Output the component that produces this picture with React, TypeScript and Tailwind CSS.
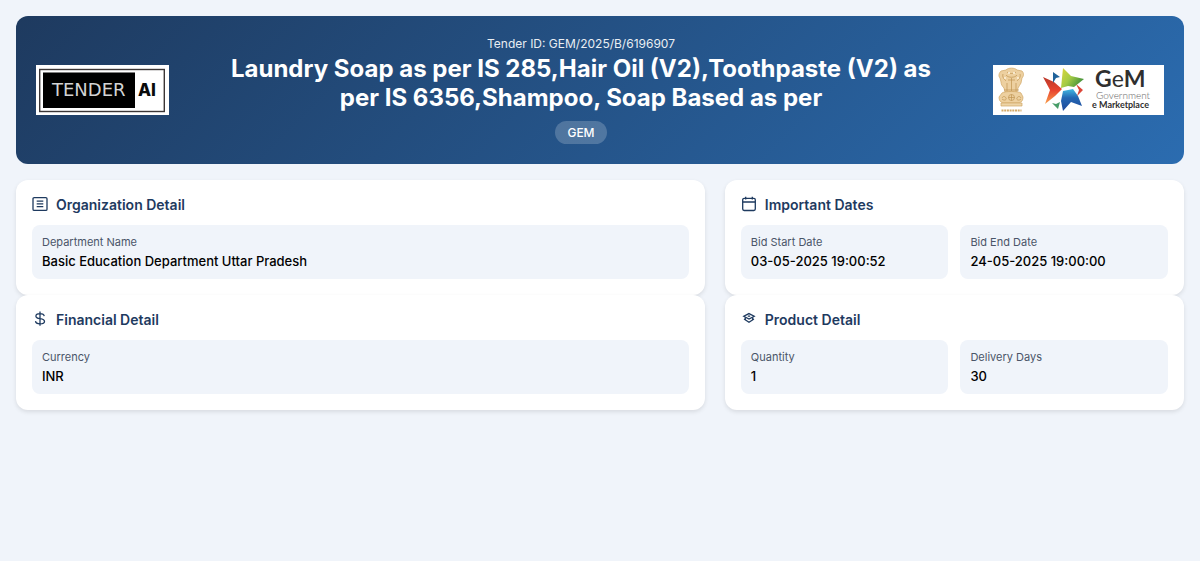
import React from 'react';

const organization = [
  { label: 'Department Name', value: 'Basic Education Department Uttar Pradesh' },
];

const dates = [
  { label: 'Bid Start Date', value: '03-05-2025 19:00:52' },
  { label: 'Bid End Date', value: '24-05-2025 19:00:00' },
];

const financial = [{ label: 'Currency', value: 'INR' }];

const product = [
  { label: 'Quantity', value: '1' },
  { label: 'Delivery Days', value: '30' },
];

type Field = { label: string; value: string };

function Icon({ children }: { children: React.ReactNode }) {
  return (
    <svg className="w-4 h-4 shrink-0" viewBox="0 0 16 16" fill="none" stroke="currentColor" strokeWidth="1.3" aria-hidden="true">
      {children}
    </svg>
  );
}

function OrganizationIcon() {
  return (
    <Icon>
      <rect x="1" y="1.600" width="14" height="12.800" rx="1.200" />
      <path d="M4.700 5.200h6.600M4.700 7.900h6.600M4.700 10.600h6.600" />
    </Icon>
  );
}

function CalendarIcon() {
  return (
    <Icon>
      <rect x="1.700" y="2.300" width="12.600" height="12.200" rx="1.400" />
      <path d="M1.700 6h12.600M4.700 .7v2.800M11.300 .7v2.800" />
    </Icon>
  );
}

function DollarIcon() {
  return (
    <Icon>
      <path d="M8 .6v14.200M12.200 5.200C12 3.600 10.400 2.700 8 2.700S3.900 3.700 3.900 5.200C3.900 6.800 5.500 7.300 8 7.700s4.500 1 4.500 2.700S10.600 12.800 8 12.800 3.700 11.900 3.500 10.200" />
    </Icon>
  );
}

function ProductIcon() {
  return (
    <Icon>
      <path d="M8 2.600 13.200 5.200 8 8 2.800 5.200z" />
      <path d="M6.800 5.200h2.400M3 8l5 3.200L13 8M4.300 6.500v2M11.700 6.500v2" />
    </Icon>
  );
}

function TenderLogo() {
  return (
    <svg className="w-[133px] h-[50px] shrink-0" viewBox="0 0 133 50" role="img" aria-label="Tender AI">
      <rect width="133" height="50" fill="#fff" />
      <rect x="3.700" y="4.500" width="124.600" height="42" fill="none" stroke="#3b3636" strokeWidth="1.400" />
      <rect x="7" y="7.500" width="92" height="35.500" fill="#000" />
      <text x="16" y="31" fill="#d4d4d4" fontFamily="DejaVu Sans, sans-serif" fontSize="18">TENDER</text>
      <text x="102" y="31" fill="#0a0a0a" fontFamily="Inter, sans-serif" fontWeight="800" fontSize="17">AI</text>
    </svg>
  );
}

function GemLogo() {
  return (
    <svg className="w-[171px] h-[50px] shrink-0" viewBox="0 0 171 50" role="img" aria-label="GeM Government e Marketplace">
      <defs>
        <linearGradient id="red" x1="0" y1="0" x2="0" y2="1">
          <stop offset="0" stopColor="#b9382a" />
          <stop offset="0.5" stopColor="#e8452f" />
          <stop offset="1" stopColor="#f9a04c" />
        </linearGradient>
        <linearGradient id="green" x1="0" y1="0" x2="1" y2="0.600">
          <stop offset="0" stopColor="#dcd63a" />
          <stop offset="0.5" stopColor="#a5cb44" />
          <stop offset="1" stopColor="#3f8f3c" />
        </linearGradient>
        <linearGradient id="blue" x1="0.500" y1="0" x2="0.500" y2="1">
          <stop offset="0" stopColor="#43b9e2" />
          <stop offset="0.400" stopColor="#2467b3" />
          <stop offset="1" stopColor="#1d489a" />
        </linearGradient>
      </defs>
      <rect width="171" height="50" fill="#fff" />

      {/* lion capital */}
      <g fill="#edd0a0" stroke="#d0a664" strokeWidth="0.700">
        <path d="M13 5c2-2.500 9-2.500 11 0l5 1c2 2 2 5 0 7l-1 5c-1 2-2 3-3 5l-1 4H12l-1-4c-2-2-3-4-3-6L7 13c-2-2-1-5 1-7z" />
        <path d="M9 28c2-2 17-2 19 0l2 4c0 3-1 5-4 6H10c-3-1-4-3-4-6z" />
        <path d="M8 38h21v3H8z" fill="#edd4a8" />
      </g>
      <g fill="none" stroke="#bf9350" strokeWidth="0.700">
        <path d="M14 7c2 2 7 2 9 0M13 10c2 3 9 3 11 0M15 15h7M10 9c-1 3 1 5 3 7M27 9c1 3-1 5-3 7M14 18v8M18.500 13v13M23 18v8M11 25h15" />
        <circle cx="18.500" cy="32.500" r="3" />
        <path d="M18.500 29.500v6M15.500 32.500h6M9 33c1-2 3-2 4 0s-2 3-4 1M28 33c-1-2-3-2-4 0s2 3 4 1" />
      </g>
      <g fill="#fff7e4">
        <circle cx="16" cy="8" r="1" />
        <circle cx="21" cy="8" r="1" />
        <circle cx="12" cy="13" r="0.900" />
        <circle cx="25" cy="13" r="0.900" />
      </g>
      <path d="M8.500 45.500h20" stroke="#d3a968" strokeWidth="1.800" strokeDasharray="2 0.700" />

      {/* arrow star */}
      <path d="M50 12 61 17 69 24 62 31 52 39 57 25z" fill="url(#red)" />
      <path d="M70 3 78 11 91 14 81 22 75 21 68 23 69 13z" fill="url(#green)" />
      <path d="M70 26 80 24 85 31 89 41 78 37 70 46 68 36z" fill="url(#blue)" />
      <path d="M60 7 67 12 63 13 60 18z" fill="#20639b" />
      <path d="M83 19 90 25 84 31 86 25z" fill="#dc4638" />
      <path d="M59 38 63 39 67 37 65 44z" fill="#479d68" />

      <text x="102" y="22" fill="#2f2f2f" fontFamily="Lato, sans-serif" fontWeight="700" fontSize="23">
        G<tspan fontWeight="400">e</tspan>M
      </text>
      <text x="103" y="34" fill="#666" fontFamily="Lato, sans-serif" fontWeight="300" fontSize="10">Government</text>
      <text x="99" y="43" fill="#2f2f2f" fontFamily="Lato, sans-serif" fontWeight="700" fontSize="9">e Marketplace</text>
    </svg>
  );
}

function Card({ title, icon, fields }: { title: string; icon: React.ReactNode; fields: Field[] }) {
  return (
    <section className="bg-white rounded-xl p-4 shadow-[0_2px_4px_rgba(0,0,0,0.1)]">
      <h2 className="flex items-start gap-2 mb-3 text-sm leading-[17px] font-semibold text-[#1e3a5f]">
        {icon}
        {title}
      </h2>
      <dl className={`grid gap-3 ${fields.length > 1 ? 'grid-cols-2' : 'grid-cols-1'}`}>
        {fields.map((field) => (
          <div key={field.label} className="bg-[#f0f4fa] rounded-lg p-[10px]">
            <dt className="text-[11px] leading-[14px] text-[#4a5568] mb-1">{field.label}</dt>
            <dd className="text-[13px] leading-4 font-medium text-black">{field.value}</dd>
          </div>
        ))}
      </dl>
    </section>
  );
}

export default function App() {
  return (
    <main className="min-h-screen bg-[#f0f4fa] p-4 font-['Inter',sans-serif]">
      <header className="flex items-center justify-between p-5 mb-4 rounded-xl text-white bg-[linear-gradient(135deg,#1e3a5f,#2b6cb0)]">
        <TenderLogo />
        <div className="flex-1 px-10 text-center">
          <p className="text-xs leading-4 mb-0.5 opacity-90">Tender ID: GEM/2025/B/6196907</p>
          <h1 className="text-2xl leading-[29px] font-bold mb-[9px]">
            Laundry Soap as per IS 285,Hair Oil (V2),Toothpaste (V2) as per IS 6356,Shampoo, Soap Based as per
          </h1>
          <p className="w-fit mx-auto px-3 py-1 rounded-full bg-white/20 text-xs leading-[15px] font-medium">GEM</p>
        </div>
        <GemLogo />
      </header>
      <div className="grid grid-cols-[3fr_2fr] gap-x-5">
        <Card title="Organization Detail" icon={<OrganizationIcon />} fields={organization} />
        <Card title="Important Dates" icon={<CalendarIcon />} fields={dates} />
        <Card title="Financial Detail" icon={<DollarIcon />} fields={financial} />
        <Card title="Product Detail" icon={<ProductIcon />} fields={product} />
      </div>
    </main>
  );
}
